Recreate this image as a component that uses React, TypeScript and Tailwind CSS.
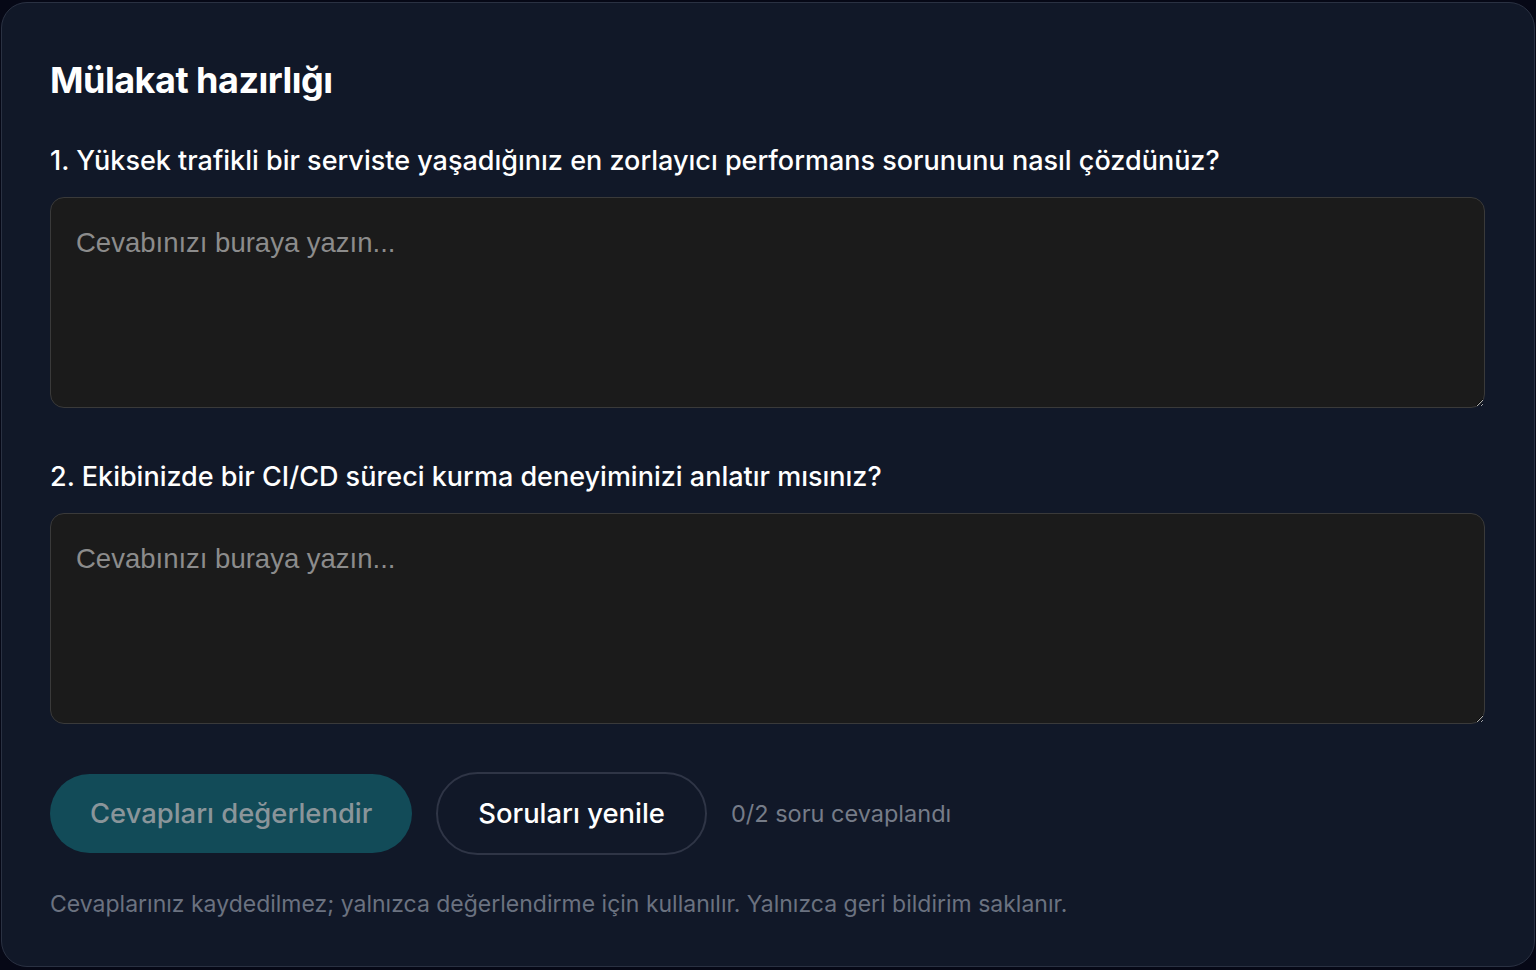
import { useState } from "react";

const questions = [
  "Yüksek trafikli bir serviste yaşadığınız en zorlayıcı performans sorununu nasıl çözdünüz?",
  "Ekibinizde bir CI/CD süreci kurma deneyiminizi anlatır mısınız?",
];

export default function App() {
  const [answers, setAnswers] = useState<string[]>(questions.map(() => ""));
  const answered = answers.filter((a) => a.trim().length > 0).length;

  return (
    <div className="min-h-screen bg-[#060816] px-px pt-[2px] pb-[2px] font-['Inter',sans-serif]">
      <section className="rounded-[26px] border border-[#2a3142] bg-[#111828] pl-[48px] pr-[49px] pt-[53px] pb-[46px]">
        <h2 className="text-[36px] font-bold leading-[48px] tracking-[-0.5px] text-white">
          Mülakat hazırlığı
        </h2>

        <div className="mt-[39px] flex flex-col gap-[51px]">
          {questions.map((q, i) => (
            <div key={i}>
              <label className="block text-[27px] font-medium leading-[36px] text-white">
                {i + 1}. {q}
              </label>
              <textarea
                value={answers[i]}
                onChange={(e) =>
                  setAnswers((prev) => prev.map((a, j) => (j === i ? e.target.value : a)))
                }
                placeholder="Cevabınızı buraya yazın..."
                className="mt-[18px] block h-[211px] w-full rounded-[14px] border border-[#3a3a3a] bg-[#1b1b1b] px-[25px] py-[28px] font-['Liberation_Sans',Arial,sans-serif] text-[27.5px] leading-[34px] text-white placeholder:text-[#8c8c8c] focus:outline-none"
              />
            </div>
          ))}
        </div>

        <div className="mt-[48px] flex items-center">
          <button
            disabled={answered === 0}
            className="h-[79px] rounded-full bg-[#124b58] px-[40px] text-[27.4px] font-medium text-[#8a959a]"
          >
            Cevapları değerlendir
          </button>
          <button className="ml-[24px] h-[83px] rounded-full border-2 border-[#2f3546] px-[40px] text-[27.4px] font-medium text-white">
            Soruları yenile
          </button>
          <span className="ml-[24px] text-[23.5px] text-[#767c88]">
            {answered}/{questions.length} soru cevaplandı
          </span>
        </div>

        <p className="mt-[33px] text-[23px] leading-[32px] text-[#6b7280]">
          Cevaplarınız kaydedilmez; yalnızca değerlendirme için kullanılır. Yalnızca geri bildirim saklanır.
        </p>
      </section>
    </div>
  );
}
